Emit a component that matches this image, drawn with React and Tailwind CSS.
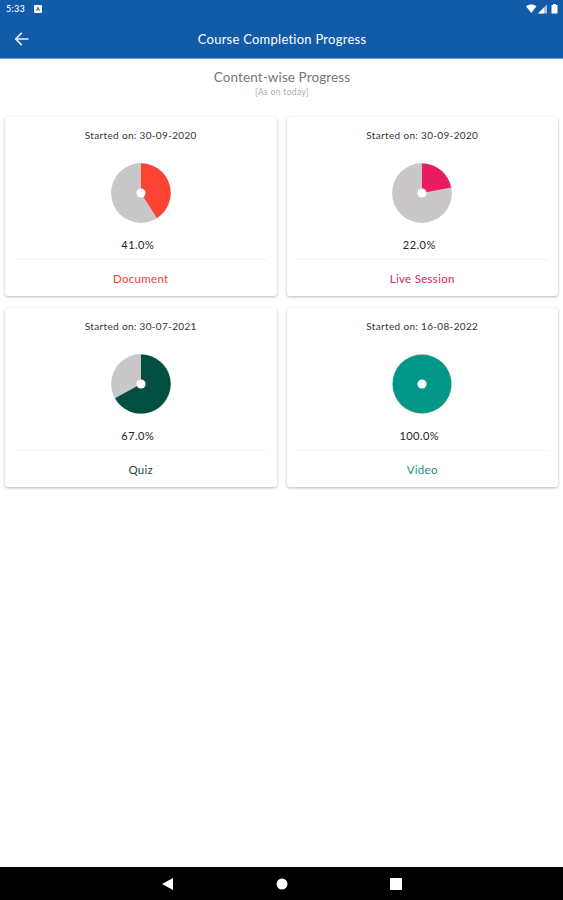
const courses = [
  { name: 'Document', started: '30-09-2020', percent: 41, fill: '#fb4233', text: 'text-[#f93a30]' },
  { name: 'Live Session', started: '30-09-2020', percent: 22, fill: '#ec1a62', text: 'text-[#e0245e]' },
  { name: 'Quiz', started: '30-07-2021', percent: 67, fill: '#024e40', text: 'text-[#1d4a40]' },
  { name: 'Video', started: '16-08-2022', percent: 100, fill: '#009688', text: 'text-[#13917f]' },
];

const slicePath = (percent, r) => {
  const angle = (percent / 100) * 2 * Math.PI;
  const x = 30 + r * Math.sin(angle);
  const y = 30 - r * Math.cos(angle);
  return `M30 30 V${30 - r} A${r} ${r} 0 ${percent > 50 ? 1 : 0} 1 ${x} ${y} Z`;
};

const PieProgress = ({ percent, fill }) => (
  <svg className="block h-[60px] w-[60px]" viewBox="0 0 60 60">
    <circle cx="30" cy="30" r="29.9" fill="#c9c7c8" />
    {percent === 100 ? (
      <circle cx="30" cy="30" r="29.3" fill={fill} />
    ) : (
      <path d={slicePath(percent, 29.6)} fill={fill} />
    )}
    <circle cx="30" cy="30" r="4.6" fill="#fff" />
  </svg>
);

const CourseCard = ({ course }) => (
  <div className="flex h-[179px] flex-col items-center rounded-[3px] bg-white pt-[11px] shadow-[0_1px_3px_rgba(0,0,0,0.28)]">
    <p className="whitespace-nowrap text-[10px] leading-[14px] tracking-[0.33px] text-[#333]">
      Started on: {course.started}
    </p>
    <div className="mt-[21px]">
      <PieProgress percent={course.percent} fill={course.fill} />
    </div>
    <p className="mt-[14px] mr-[6px] text-[11px] leading-4 tracking-[0.45px] text-[#222]">
      {course.percent.toFixed(1)}%
    </p>
    <div className="mt-[6px] h-px w-[252px] bg-[#f3f3f3]" />
    <p className={`mt-[11px] text-[11.5px] leading-4 tracking-[0.3px] ${course.text}`}>{course.name}</p>
  </div>
);

const StatusBar = () => (
  <div className="flex h-[18px] items-center justify-between pr-[5px] pl-[6px] text-white">
    <div className="flex items-center gap-[9px]">
      <span className="text-[9px] leading-[18px] font-medium tracking-[0.3px]">5:33</span>
      <svg className="h-2 w-2" viewBox="0 0 8 8">
        <rect width="8" height="8" rx="1" fill="#fff" />
        <path d="M2.5 5.7L4 2.2L5.5 5.7M3 4.7H5" fill="none" stroke="#125ba9" strokeWidth="0.9" />
      </svg>
    </div>
    <svg className="h-[10px] w-[32px]" viewBox="0 0 32 10" fill="#fff">
      <path d="M0 2.3C3 -0.2 7.5 -0.2 10.5 2.3L5.25 9Z" />
      <path d="M12 9.5L21 0.5V9.5Z" opacity="0.65" />
      <path d="M12 9.5L18 3.5V9.5Z" />
      <path d="M25.5 1H27V0H30V1H31.5V9.5H25.5Z" />
    </svg>
  </div>
);

const App = () => {
  return (
    <div className="flex h-[900px] w-[563px] flex-col overflow-hidden bg-white font-['Lato','Open_Sans',sans-serif]">
      {/* Header */}
      <header className="h-[59px] shrink-0 border-b border-[#6f99cb] bg-[#125ba9]">
        <StatusBar />
        <div className="grid h-10 grid-cols-[60px_1fr_60px] items-center text-white">
          <svg className="mt-px ml-[14px] h-4 w-[15px]" viewBox="0 0 15 16" fill="none" stroke="#e4eefa" strokeWidth="1.7">
            <path d="M14.5 8H1.8M7.8 1.9L1.8 8L7.8 14.1" />
          </svg>
          <h1 className="pt-px pl-px text-center text-[13px] leading-4 tracking-[0.25px]">Course Completion Progress</h1>
        </div>
      </header>

      <main className="flex-1 px-[5px] pt-[9px]">
        <div className="pl-px text-center">
          <h2 className="text-[13.5px] leading-[18px] tracking-[0.1px] text-[#777]">Content-wise Progress</h2>
          <p className="text-[8.5px] leading-3 tracking-[0.35px] text-[#aaa]">[As on today]</p>
        </div>

        {/* Course cards */}
        <div className="mt-[19px] grid grid-cols-2 gap-x-[10px] gap-y-[11.5px]">
          {courses.map((course) => (
            <CourseCard key={course.name} course={course} />
          ))}
        </div>
      </main>

      {/* Android navigation */}
      <nav className="flex h-[33px] shrink-0 items-center justify-center gap-[102px] bg-black">
        <svg className="h-3 w-3" viewBox="0 0 12 12" fill="#fff">
          <path d="M0 6L11 0V12Z" />
        </svg>
        <svg className="h-3 w-3" viewBox="0 0 12 12" fill="#fff">
          <circle cx="6" cy="6" r="5.5" />
        </svg>
        <svg className="h-3 w-3" viewBox="0 0 12 12" fill="#fff">
          <rect width="12" height="12" rx="1" />
        </svg>
      </nav>
    </div>
  );
};

export default App;
